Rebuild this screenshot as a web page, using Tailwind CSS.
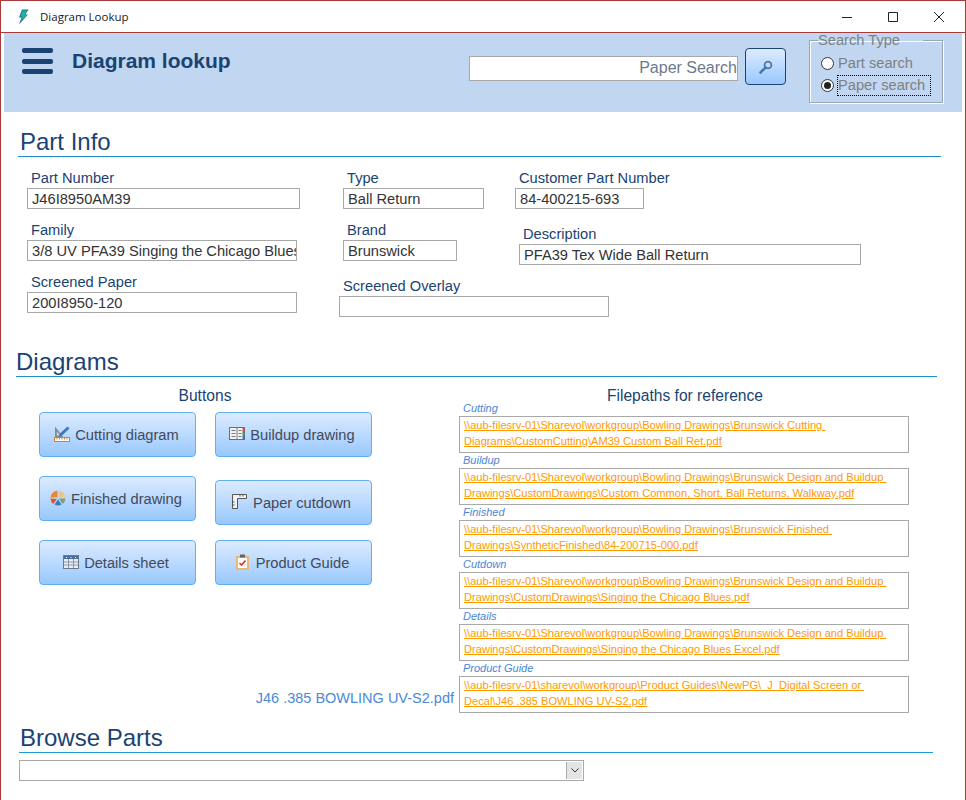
<!DOCTYPE html>
<html lang="en">
<head>
  <meta charset="UTF-8" />
  <title>Diagram Lookup</title>
  <script src="https://cdn.jsdelivr.net/npm/@tailwindcss/browser@4"></script>
</head>
<body class="bg-white">
  <div class="w-[966px] h-[800px] overflow-hidden border border-b-0 border-[#a83a3a] bg-white font-['Liberation_Sans',sans-serif] text-[#1a4373]">

    <!-- Title bar -->
    <div class="h-[31px] flex items-center border-b border-[#a83a3a] box-content">
      <svg class="ml-[16px] w-[12px] h-[16px]" viewBox="0 0 12 16">
        <path d="M5 0.5h6.5L8.5 5.5H11L2 15.5l2.5-7H2z" fill="#1f6fa8" />
        <path d="M5.5 1.5h5L8 6h2L4 12l1.5-4.5H3.5z" fill="#1fb58f" />
      </svg>
      <span class="ml-[11px] text-[11.5px] text-[#1a1a1a] font-['Open_Sans',sans-serif]">Diagram Lookup</span>
      <div class="ml-auto flex items-center">
        <svg class="w-[10px] h-[10px]" viewBox="0 0 10 10"><path d="M0 5.500h10" stroke="#222" /></svg>
        <svg class="ml-[36px] w-[10px] h-[10px]" viewBox="0 0 10 10"><path d="M.5.5h9v9h-9z" fill="none" stroke="#222" /></svg>
        <svg class="ml-[36px] mr-[21px] w-[10px] h-[10px]" viewBox="0 0 10 10"><path d="M0 0l10 10M10 0L0 10" stroke="#222" /></svg>
      </div>
    </div>

    <!-- Blue header -->
    <div class="mx-[3px] h-[79px] bg-[#c1d6f0] flex items-start">
      <div class="ml-[18px] mt-[15px] w-[31px] flex flex-col gap-[5.500px]">
        <div class="h-[5px] rounded-[2px] bg-[#1a4373]"></div>
        <div class="h-[5px] rounded-[2px] bg-[#1a4373]"></div>
        <div class="h-[5px] rounded-[2px] bg-[#1a4373]"></div>
      </div>
      <h1 class="ml-[19px] mt-[15px] text-[21px] leading-[26px] font-bold">Diagram lookup</h1>
      <div class="ml-auto mt-[23px] w-[269px] h-[25px] bg-white border border-[#a9a9a9] text-right text-[16px] leading-[22px] text-[#6d7a8a]">Paper Search</div>
      <button class="ml-[7px] mt-[15px] w-[41px] h-[37px] rounded-[4px] border border-[#1a4373] bg-gradient-to-b from-[#dcebff] to-[#98c8fd] flex items-center justify-center">
        <svg class="w-[14px] h-[14px]" viewBox="0 0 14 14">
          <circle cx="9" cy="5" r="3.400" fill="none" stroke="#4a78a8" stroke-width="1.800" />
          <path d="M6.500 7.500L1.500 12.500" stroke="#4a78a8" stroke-width="2.600" stroke-linecap="round" />
        </svg>
      </button>
      <fieldset class="ml-[23px] mr-[19px] -mt-px w-[134px] h-[71px] border border-[#98a6b8] shadow-[1px_1px_0_#fff,inset_1px_1px_0_#fff] pl-[8px] text-[14.670px] leading-[17px] text-[#808080]">
        <legend class="px-0 pr-[23px]">Search Type</legend>
        <div class="ml-[3px] mt-[3px] flex items-center h-[22px]">
          <span class="w-[13px] h-[13px] rounded-full bg-white border border-[#333]"></span>
          <span class="ml-[4px]">Part search</span>
        </div>
        <div class="ml-[3px] flex items-center h-[22px]">
          <span class="w-[13px] h-[13px] rounded-full bg-white border border-[#333] flex items-center justify-center"><span class="w-[7px] h-[7px] rounded-full bg-[#222]"></span></span>
          <span class="ml-[3px] h-[21px] pr-[5px] leading-[18px] border border-dotted border-black">Paper search</span>
        </div>
      </fieldset>
    </div>

    <!-- Part Info -->
    <div class="ml-[17px] mt-[16px] w-[923px] h-[29px] border-b border-[#1c8fcc] pl-[2px] text-[24px] leading-[28px]">Part Info</div>
    <div class="flex mt-[13px] ml-[26px] text-[14.670px] text-[#1a4373]">
      <div class="w-[316px] flex flex-col gap-[13px]">
        <div>
          <div class="h-[18px] leading-[16px] pl-[4px]">Part Number</div>
          <div class="w-[273px] h-[21px] border border-[#a9a9a9] px-[4px] leading-[20px] text-[#333] whitespace-nowrap overflow-hidden">J46I8950AM39</div>
        </div>
        <div>
          <div class="h-[18px] leading-[16px] pl-[4px]">Family</div>
          <div class="w-[270px] h-[21px] border border-[#a9a9a9] px-[4px] leading-[20px] text-[#333] whitespace-nowrap overflow-hidden">3/8 UV PFA39 Singing the Chicago Blues</div>
        </div>
        <div>
          <div class="h-[18px] leading-[16px] pl-[4px]">Screened Paper</div>
          <div class="w-[270px] h-[21px] border border-[#a9a9a9] px-[4px] leading-[20px] text-[#333] whitespace-nowrap overflow-hidden">200I8950-120</div>
        </div>
      </div>
      <div class="w-[172px] flex flex-col">
        <div>
          <div class="h-[18px] leading-[16px] pl-[4px]">Type</div>
          <div class="w-[141px] h-[21px] border border-[#a9a9a9] px-[4px] leading-[20px] text-[#333]">Ball Return</div>
        </div>
        <div class="mt-[13px]">
          <div class="h-[18px] leading-[16px] pl-[4px]">Brand</div>
          <div class="w-[114px] h-[21px] border border-[#a9a9a9] px-[4px] leading-[20px] text-[#333]">Brunswick</div>
        </div>
        <div class="mt-[17px] -ml-[4px]">
          <div class="h-[18px] leading-[16px] pl-[4px]">Screened Overlay</div>
          <div class="w-[270px] h-[21px] border border-[#a9a9a9]"></div>
        </div>
      </div>
      <div class="flex flex-col">
        <div>
          <div class="h-[18px] leading-[16px] pl-[4px]">Customer Part Number</div>
          <div class="w-[129px] h-[21px] border border-[#a9a9a9] px-[4px] leading-[20px] text-[#333]">84-400215-693</div>
        </div>
        <div class="mt-[17px] ml-[4px]">
          <div class="h-[18px] leading-[16px] pl-[4px]">Description</div>
          <div class="w-[342px] h-[21px] border border-[#a9a9a9] px-[4px] leading-[20px] text-[#333]">PFA39 Tex Wide Ball Return</div>
        </div>
      </div>
    </div>

    <!-- Diagrams -->
    <div class="ml-[15px] mt-[31px] w-[921px] h-[29px] border-b border-[#1c8fcc] text-[24px] leading-[28px]">Diagrams</div>
    <div class="flex mt-[9px]">
      <div class="w-[458px] flex flex-col">
        <div class="w-[408px] h-[18px] text-center text-[15.600px] leading-[20px]">Buttons</div>
        <div class="flex ml-[38px] mt-[8px] gap-[19px] text-[14.670px] text-[#44495a]">
          <div class="w-[157px] flex flex-col gap-[19px]">
            <button class="h-[45px] rounded-[4px] border border-[#63aeef] bg-gradient-to-b from-[#dcebff] to-[#98c8fd] flex items-center justify-center gap-[5px] pt-[1px] pr-[2px]">
              <svg class="w-[16px] h-[16px] -mt-[2px]" viewBox="0 0 16 16">
                <path d="M1 .5v10.500h8z" fill="#8a8a8a" />
                <path d="M2.800 5.500v4h3.500z" fill="#c4d8f0" />
                <path d="M5.500 8l8-7.500 2 2-8 7.500-2.500.5z" fill="#3d78b8" />
                <rect x=".5" y="11.500" width="15" height="4" fill="#fff" stroke="#e27a2a" />
                <path d="M3 12v1.500M5.500 12v1.500M8 12v1.500M10.500 12v1.500M13 12v1.500" stroke="#e27a2a" />
              </svg>
              Cutting diagram
            </button>
            <button class="h-[45px] rounded-[4px] border border-[#63aeef] bg-gradient-to-b from-[#dcebff] to-[#98c8fd] flex items-center justify-center gap-[5px] pt-[1px] pr-[3px]">
              <svg class="w-[16px] h-[16px] -mt-[3px]" viewBox="0 0 16 16">
                <path d="M8.500 7.500V.5a7.500 7.500 0 0 1 7 6.500z" fill="#e8c88a" />
                <path d="M8.800 8.500h6.700a7.500 7.500 0 0 1-3 5.500z" fill="#7d9e84" />
                <path d="M8 9.500l3.500 5a7.500 7.500 0 0 1-7 0z" fill="#3d78b8" />
                <path d="M6.800 9l-3.500 5A7.500 7.500 0 0 1 .5 8.500z" fill="#d9552e" />
                <path d="M7.500 7.500H.5A7.500 7.500 0 0 1 7.500.5z" fill="#e8892e" />
              </svg>
              Finished drawing
            </button>
            <button class="h-[45px] rounded-[4px] border border-[#63aeef] bg-gradient-to-b from-[#dcebff] to-[#98c8fd] flex items-center justify-center gap-[5px] pt-[1px] pr-[3px]">
              <svg class="w-[16px] h-[14px] -mt-[3px]" viewBox="0 0 16 14">
                <rect x=".5" y=".5" width="15" height="13" fill="#e8eef5" stroke="#6a7a8c" />
                <rect x="1" y="1" width="14" height="3" fill="#4a6f9c" />
                <path d="M3 2.500h1M7.500 2.500h1M12 2.500h1" stroke="#fff" />
                <path d="M1 7h14M1 10h14M5.500 4v9M10.500 4v9" stroke="#8a96a4" />
              </svg>
              Details sheet
            </button>
          </div>
          <div class="w-[157px] flex flex-col">
            <button class="h-[45px] rounded-[4px] border border-[#63aeef] bg-gradient-to-b from-[#dcebff] to-[#98c8fd] flex items-center justify-center gap-[5px] pt-[1px] pr-[3px]">
              <svg class="w-[16px] h-[13px] -mt-[3px]" viewBox="0 0 16 13">
                <rect x=".5" y=".5" width="15" height="12" fill="#f2f2f2" stroke="#6a6a78" />
                <path d="M8 .5v12M2.500 3.500h4M2.500 6.500h4M2.500 9.500h4M9.500 3.500h3M9.500 6.500h3M9.500 9.500h3" stroke="#7a7a88" />
                <path d="M14.500 1v4" stroke="#d9552e" stroke-width="2" />
                <path d="M14.500 5v4" stroke="#3d9a6a" stroke-width="2" />
                <path d="M14.500 9v3" stroke="#3d78b8" stroke-width="2" />
              </svg>
              Buildup drawing
            </button>
            <button class="mt-[23px] h-[45px] rounded-[4px] border border-[#63aeef] bg-gradient-to-b from-[#dcebff] to-[#98c8fd] flex items-center justify-center gap-[6px] pt-[1px] pr-[4px]">
              <svg class="w-[15px] h-[15px] -mt-[4px]" viewBox="0 0 15 15">
                <path d="M.5.5h14v4h-9v10h-5z" fill="#f2f2f2" stroke="#555" />
                <path d="M8 .5v2M11 .5v2M.5 8h2M.5 11h2" stroke="#555" />
              </svg>
              Paper cutdown
            </button>
            <button class="mt-[15px] h-[45px] rounded-[4px] border border-[#63aeef] bg-gradient-to-b from-[#dcebff] to-[#98c8fd] flex items-center justify-center gap-[7px] pt-[1px] pr-[2px]">
              <svg class="w-[13px] h-[16px] -mt-[2px]" viewBox="0 0 13 16">
                <rect y="2" width="13" height="14" fill="#e8b878" />
                <rect x="2" y="4" width="9" height="10" fill="#fff" />
                <path d="M4 0.500h5v3H4z" fill="#666" />
                <path d="M3.500 9l2 2 4-4.500" fill="none" stroke="#d9352e" stroke-width="1.600" />
              </svg>
              Product Guide
            </button>
          </div>
        </div>
        <div class="mt-auto mb-[6px] self-end pr-[5px] text-[14.500px] leading-[18px] text-[#4a8ad8]">J46 .385 BOWLING UV-S2.pdf</div>
      </div>

      <div class="w-[452px]">
        <div class="h-[16px] text-center text-[15.600px] leading-[20px]">Filepaths for reference</div>
        <div class="text-[11.100px] leading-[16px] text-[#ff9900]">
          <div class="h-[14px] pl-[4px] italic text-[11px] text-[#4a86d8] leading-[12px]">Cutting</div>
          <div class="w-[450px] h-[37px] border border-[#a9a9a9] pl-[4px] whitespace-pre underline">\\aub-filesrv-01\Sharevol\workgroup\Bowling Drawings\Brunswick Cutting <br>Diagrams\CustomCutting\AM39 Custom Ball Ret.pdf</div>
          <div class="mt-px h-[14px] pl-[4px] italic text-[11px] text-[#4a86d8] leading-[12px]">Buildup</div>
          <div class="w-[450px] h-[37px] border border-[#a9a9a9] pl-[4px] whitespace-pre underline">\\aub-filesrv-01\Sharevol\workgroup\Bowling Drawings\Brunswick Design and Buildup <br>Drawings\CustomDrawings\Custom Common, Short, Ball Returns, Walkway.pdf</div>
          <div class="mt-px h-[14px] pl-[4px] italic text-[11px] text-[#4a86d8] leading-[12px]">Finished</div>
          <div class="w-[450px] h-[37px] border border-[#a9a9a9] pl-[4px] whitespace-pre underline">\\aub-filesrv-01\Sharevol\workgroup\Bowling Drawings\Brunswick Finished <br>Drawings\SyntheticFinished\84-200715-000.pdf</div>
          <div class="mt-px h-[14px] pl-[4px] italic text-[11px] text-[#4a86d8] leading-[12px]">Cutdown</div>
          <div class="w-[450px] h-[37px] border border-[#a9a9a9] pl-[4px] whitespace-pre underline">\\aub-filesrv-01\Sharevol\workgroup\Bowling Drawings\Brunswick Design and Buildup <br>Drawings\CustomDrawings\Singing the Chicago Blues.pdf</div>
          <div class="mt-px h-[14px] pl-[4px] italic text-[11px] text-[#4a86d8] leading-[12px]">Details</div>
          <div class="w-[450px] h-[37px] border border-[#a9a9a9] pl-[4px] whitespace-pre underline">\\aub-filesrv-01\Sharevol\workgroup\Bowling Drawings\Brunswick Design and Buildup <br>Drawings\CustomDrawings\Singing the Chicago Blues Excel.pdf</div>
          <div class="mt-px h-[14px] pl-[4px] italic text-[11px] text-[#4a86d8] leading-[12px]">Product Guide</div>
          <div class="w-[450px] h-[37px] border border-[#a9a9a9] pl-[4px] whitespace-pre underline">\\aub-filesrv-01\sharevol\workgroup\Product Guides\NewPG\_J_Digital Screen or <br>Decal\J46 .385 BOWLING UV-S2.pdf</div>
        </div>
      </div>
    </div>

    <!-- Browse Parts -->
    <div class="ml-[18px] mt-[11px] w-[914px] h-[29px] border-b border-[#1c9bd8] pl-px text-[24px] leading-[28px]">Browse Parts</div>
    <div class="ml-[18px] mt-[7px] w-[565px] h-[21px] border border-[#a9a9a9] flex justify-end">
      <div class="w-[16px] border-l border-[#a9a9a9] bg-[#e4e4e4] m-px ml-0 flex items-center justify-center">
        <svg class="w-[8px] h-[5px]" viewBox="0 0 8 5"><path d="M.5.5L4 4 7.500.5" fill="none" stroke="#333" /></svg>
      </div>
    </div>
  </div>
</body>
</html>
